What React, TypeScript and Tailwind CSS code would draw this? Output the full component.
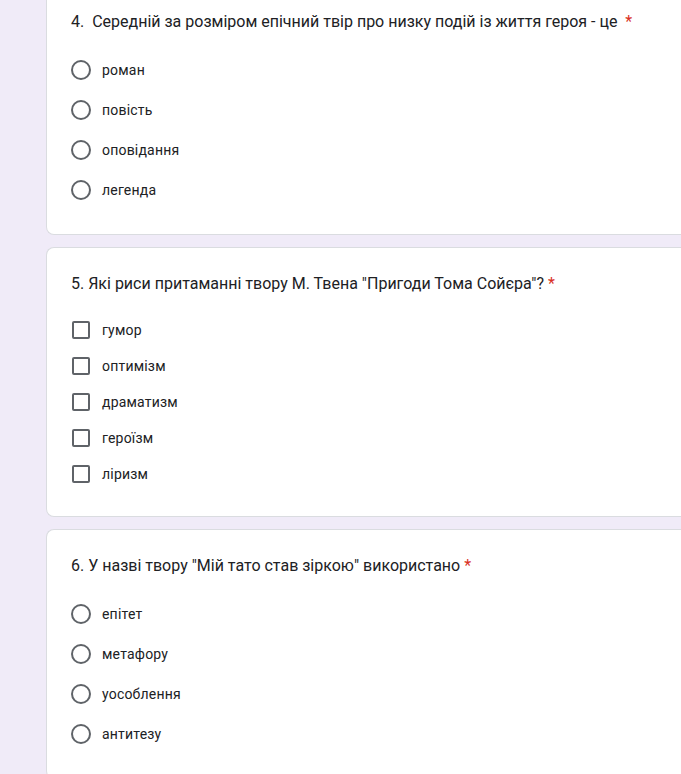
import React from 'react';

type Question = {
    title: string;
    kind: 'radio' | 'checkbox';
    options: string[];
};

const questions: Question[] = [
    {
        title: '4.  Середній за розміром епічний твір про низку подій із життя героя - це ',
        kind: 'radio',
        options: ['роман', 'повість', 'оповідання', 'легенда'],
    },
    {
        title: '5. Які риси притаманні твору М. Твена "Пригоди Тома Сойєра"?',
        kind: 'checkbox',
        options: ['гумор', 'оптимізм', 'драматизм', 'героїзм', 'ліризм'],
    },
    {
        title: '6. У назві твору "Мій тато став зіркою" використано',
        kind: 'radio',
        options: ['епітет', 'метафору', 'уособлення', 'антитезу'],
    },
];

function Radio() {
    return <span className="w-5 h-5 rounded-full border-2 border-[#5f6368] shrink-0" />;
}

function Checkbox() {
    return <span className="w-[18px] h-[18px] ml-px mr-px rounded-[2px] border-2 border-[#5f6368] shrink-0" />;
}

export default function App() {
    return (
        <div
            className="min-h-screen bg-[#f0ebf8] pl-[46px] overflow-hidden"
            style={{ fontFamily: 'Roboto, "Noto Sans", Arial, sans-serif' }}
        >
            <div className="flex flex-col gap-3 -mt-[15px]">
                {questions.map((q, i) => (
                    <div
                        key={i}
                        className="bg-white border border-[#dadce0] rounded-l-lg border-r-0 px-6 pt-6 pb-6 w-[700px]"
                    >
                        <div className="text-base leading-6 font-normal text-[#202124] whitespace-pre">
                            {q.title}
                            <span className="text-[#d93025]"> *</span>
                        </div>
                        <div className="mt-4 flex flex-col">
                            {q.options.map((o) => (
                                <div
                                    key={o}
                                    className={`flex items-center ${q.kind === 'radio' ? 'h-10' : 'h-9'}`}
                                >
                                    {q.kind === 'radio' ? <Radio /> : <Checkbox />}
                                    <span className="ml-[11px] text-sm font-normal text-[#202124] tracking-[0.2px]">{o}</span>
                                </div>
                            ))}
                        </div>
                    </div>
                ))}
            </div>
        </div>
    );
}
